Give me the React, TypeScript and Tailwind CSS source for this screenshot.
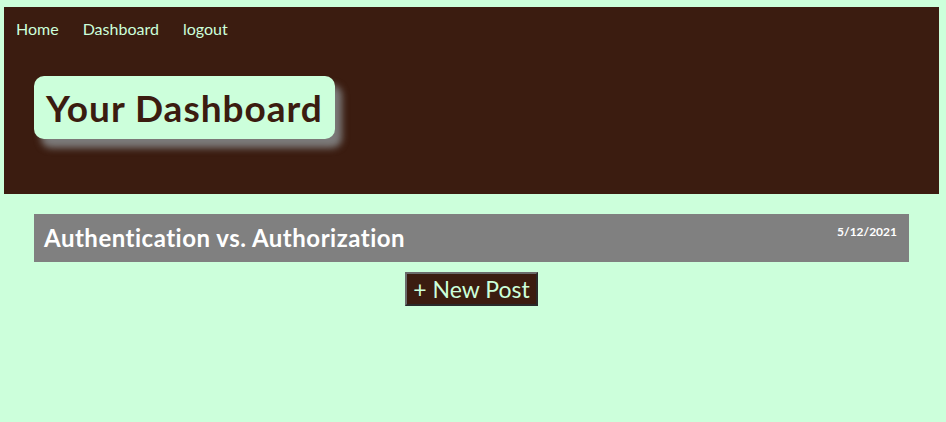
export default function App() {
  return (
    <div className="min-h-[422px] bg-[#ccffdb] pt-[7px] pl-[4px] pr-[7px] font-['Lato','Open_Sans',sans-serif]">
      <header className="h-[187px] bg-[#3b1c10] text-[#ccffdb]">
        <nav className="flex gap-6 pl-3 pt-[12px] text-[16px] leading-5">
          <a href="#">Home</a>
          <a href="#">Dashboard</a>
          <a href="#">logout</a>
        </nav>
        <div className="pl-[30px] pt-[37px]">
          <h1 className="inline-block rounded-[10px] bg-[#ccffdb] px-3 py-[10px] text-[37px] font-bold leading-[43px] tracking-[1px] text-[#3b1c10] shadow-[7px_9px_7px_rgba(128,128,128,0.95)]">
            Your Dashboard
          </h1>
        </div>
      </header>
      <main className="px-[30px] pt-[20px]">
        <div className="flex h-[48px] items-start justify-between bg-[#808080] px-[10px] text-white">
          <h2 className="pt-[10px] text-[24px] font-bold leading-7 tracking-[0.5px]">
            Authentication vs. Authorization
          </h2>
          <span className="pt-[10px] pr-[2px] text-[12px] font-bold leading-4">
            5/12/2021
          </span>
        </div>
        <div className="flex justify-center pt-[10px]">
          <button
            type="button"
            className="h-[34px] border-2 border-t-[#6b6b6b] border-l-[#6b6b6b] border-r-[#2a2a2a] border-b-[#2a2a2a] bg-[#3b1c10] px-[6px] text-[23px] leading-6 text-[#ccffdb]"
          >
            + New Post
          </button>
        </div>
      </main>
    </div>
  );
}
